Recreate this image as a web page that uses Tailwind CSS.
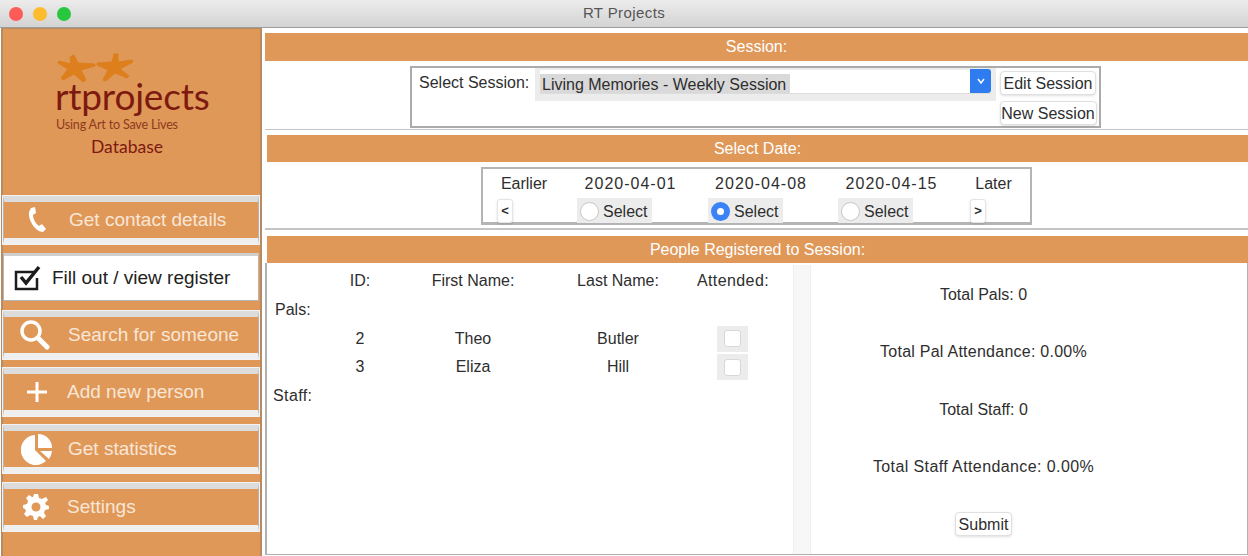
<!DOCTYPE html>
<html lang="en">
<head>
    <meta charset="UTF-8">
    <meta name="viewport" content="width=device-width, initial-scale=1.0">
    <title>RT Projects</title>
    <script src="https://cdn.jsdelivr.net/npm/@tailwindcss/browser@4"></script>
</head>
<body class="bg-white overflow-hidden font-['Liberation_Sans',sans-serif] text-[#2e2e2e]">
<div class="w-[1248px] h-[556px] flex flex-col overflow-hidden">
    <!-- title bar -->
    <div class="h-[28px] shrink-0 relative flex items-center justify-center bg-gradient-to-b from-[#ececec] to-[#d3d3d3] border-b border-[#9c9c9c]">
        <div class="absolute left-[9px] top-[7px] flex gap-[10px]">
            <span class="w-[14px] h-[14px] rounded-full bg-[#fc5b57]"></span>
            <span class="w-[14px] h-[14px] rounded-full bg-[#fdbc2e]"></span>
            <span class="w-[14px] h-[14px] rounded-full bg-[#27c83f]"></span>
        </div>
        <span class="text-[15px] text-[#555] tracking-[0.4px]">RT Projects</span>
    </div>

    <div class="flex flex-1 min-h-0">
        <!-- sidebar -->
        <aside class="ml-[1px] w-[261px] shrink-0 bg-[#e09859] border-l-2 border-r-2 border-t border-[#b9895f] flex flex-col">
            <div class="h-[167px] shrink-0 relative">
                <svg class="absolute left-[52px] top-[23px]" width="84" height="34" viewBox="0 0 84 34" fill="#dd7f1c" stroke="#dd7f1c" stroke-linejoin="round">
                    <g transform="translate(-54 -53)">
                        <path d="M69 58L73 56L77 64L94 65V67L80 71L85 81L82 83L73 75L62 81L60 79L67 70L57 64L58 62L70 65Z" stroke-width="1"/>
                        <path d="M113 55L117 55L117 63L131 61L132 63L119 70L128 77L126 79L114 74L105 82L102 81L107 71L96 66L96 64L111 63Z" stroke-width="1"/>
                    </g>
                </svg>
                <div class="absolute left-[52px] top-[49px] font-['Lato',sans-serif] text-[37px] leading-[36px] text-[#7c1a10] tracking-[-0.2px]">rtprojects</div>
                <div class="absolute left-[53px] top-[88px] font-['Lato',sans-serif] text-[12.600px] leading-[15px] text-[#8f3a1c] tracking-[-0.2px]">Using Art to Save Lives</div>
                <div class="absolute left-[88px] top-[107px] font-['Lato',sans-serif] text-[17.500px] leading-[22px] text-[#7c1a10]">Database</div>
            </div>

            <a class="h-[48px] w-[256px] border border-[#b5b5b5] outline outline-1 outline-[#f2f2f2] border-t-[6px] border-t-[#dcdcdc] border-b-[6px] border-b-[#efefef] flex items-center text-[19px] text-[#f8e6d6] bg-[#e09859]">
                <svg class="ml-[23px] mr-[22px] shrink-0" width="20" height="26" viewBox="0 0 20 26" fill="#fff"><path d="M4 1L8 0L9 6L6 8C6 12 9 17 12 19L15 17L19 22L16 25C9 25 1 14 2 5Z"/></svg>
                <span>Get contact details</span>
            </a>
            <a class="mt-[9px] h-[48px] w-[256px] border border-[#b5b5b5] border-t-[3px] border-t-[#cfcfcf] bg-white flex items-center text-[19px] text-[#222]">
                <svg class="ml-[10px] mr-[11px] shrink-0" width="27" height="27" viewBox="0 0 27 27" fill="none" stroke="#1c1c1c"><path d="M20 7H2V24H23V13" stroke-width="2.500"/><path d="M7 12L12 18L25 2" stroke-width="3.500"/></svg>
                <span>Fill out / view register</span>
            </a>
            <a class="mt-[10px] h-[48px] w-[256px] border border-[#b5b5b5] outline outline-1 outline-[#f2f2f2] border-t-[6px] border-t-[#dcdcdc] border-b-[6px] border-b-[#efefef] flex items-center text-[19px] text-[#f8e6d6] bg-[#e09859]">
                <svg class="ml-[15px] mr-[17px] shrink-0" width="32" height="30" viewBox="0 0 32 30" fill="none" stroke="#fff"><circle cx="12" cy="11" r="9" stroke-width="3.500"/><path d="M19 18L28 27" stroke-width="5" stroke-linecap="round"/></svg>
                <span>Search for someone</span>
            </a>
            <a class="mt-[9px] h-[48px] w-[256px] border border-[#b5b5b5] outline outline-1 outline-[#f2f2f2] border-t-[6px] border-t-[#dcdcdc] border-b-[6px] border-b-[#efefef] flex items-center text-[19px] text-[#f8e6d6] bg-[#e09859]">
                <svg class="ml-[22px] mr-[19px] shrink-0" width="22" height="22" viewBox="0 0 22 22" stroke="#fff" stroke-width="3"><path d="M11 1V21M1 11H21"/></svg>
                <span>Add new person</span>
            </a>
            <a class="mt-[9px] h-[48px] w-[256px] border border-[#b5b5b5] outline outline-1 outline-[#f2f2f2] border-t-[6px] border-t-[#dcdcdc] border-b-[6px] border-b-[#efefef] flex items-center text-[19px] text-[#f8e6d6] bg-[#e09859]">
                <svg class="ml-[17px] mr-[15px] shrink-0" width="32" height="32" viewBox="0 0 32 32" fill="#fff"><path d="M14 2V17L25 28A15 15 0 1 1 14 2Z"/><path d="M17 1A14 14 0 0 1 31 15H17Z"/><path d="M19 18H31A15 15 0 0 1 28 26Z"/></svg>
                <span>Get statistics</span>
            </a>
            <a class="mt-[10px] h-[48px] w-[256px] border border-[#b5b5b5] outline outline-1 outline-[#f2f2f2] border-t-[6px] border-t-[#dcdcdc] border-b-[6px] border-b-[#efefef] flex items-center text-[19px] text-[#f8e6d6] bg-[#e09859]">
                <svg class="ml-[19px] mr-[18px] shrink-0" width="26" height="26" viewBox="0 0 26 26" fill="#fff"><path fill-rule="evenodd" d="M11 0H15L16 4L19 5L23 3L25 6L22 9L23 11L26 12V15L22 16L21 19L23 22L20 25L17 22L15 23L14 26H11L10 22L7 21L4 23L1 20L3 17L2 15L0 14V11L4 10L5 7L3 4L6 1L9 3L10 3Z M13 8.500A4.500 4.500 0 1 0 13 17.500A4.500 4.500 0 1 0 13 8.500Z"/></svg>
                <span>Settings</span>
            </a>
        </aside>

        <!-- main column -->
        <main class="flex-1 min-w-0 ml-[3px] flex flex-col">
            <section class="mt-[5px]">
                <div class="h-[28px] bg-[#e09859] text-white text-[16px] flex items-center justify-center">Session:</div>
                <div class="mt-[5px] ml-[145px] w-[691px] h-[62px] border-2 border-[#ababab] flex items-start">
                    <div class="pl-[7px] pt-[5px] w-[123px] shrink-0 text-[16px] leading-[20px] whitespace-nowrap">Select Session:</div>
                    <div class="h-[33px] w-[461px] bg-[#ececec] px-[5px] pt-[2px] shrink-0">
                        <div class="h-[24px] bg-white border-b border-[#dcdcdc] flex items-end justify-between">
                            <span class="w-[250px] h-[19px] bg-[#d9d9d9] pl-[2px] text-[16px] leading-[22px] whitespace-nowrap">Living Memories - Weekly Session</span>
                            <span class="w-[21px] h-[24px] bg-[#2f7cf0] rounded-r-[3px] flex items-center justify-center">
                                <svg width="10" height="8" viewBox="0 0 10 8" fill="none" stroke="#fff" stroke-width="1.500"><path d="M2 2L5 6L8 2"/></svg>
                            </span>
                        </div>
                    </div>
                    <div class="ml-[3px] pt-[3px] flex flex-col gap-[6px] items-center w-[98px]">
                        <button class="w-[96px] h-[24px] rounded-[4px] bg-white border border-[#e0e0e0] shadow-sm text-[16px] whitespace-nowrap">Edit Session</button>
                        <button class="w-[97px] h-[24px] rounded-[4px] bg-white border border-[#e0e0e0] shadow-sm text-[16px] whitespace-nowrap">New Session</button>
                    </div>
                </div>
            </section>

            <section class="mt-[1px] border-t border-[#c4c4c4]">
                <div class="mt-[5px] ml-[2px] h-[27px] bg-[#e09859] text-white text-[16px] flex items-center justify-center">Select Date:</div>
                <div class="mt-[5px] ml-[216px] w-[551px] h-[58px] border-2 border-b-[3px] border-[#b4b4b4] grid grid-cols-[82px_131px_130px_131px_73px] grid-rows-[29px_1fr] text-center text-[16px]">
                    <div class="pt-[5px] leading-[20px]">Earlier</div>
                    <div class="pt-[5px] leading-[20px] tracking-[1px]">2020-04-01</div>
                    <div class="pt-[5px] leading-[20px] tracking-[1px]">2020-04-08</div>
                    <div class="pt-[5px] leading-[20px] tracking-[1px]">2020-04-15</div>
                    <div class="pt-[5px] leading-[20px]">Later</div>
                    <div class="pl-[14px] pt-[1px] flex"><button class="w-[16px] h-[24px] rounded-[3px] bg-white border border-[#e4e4e4] shadow-sm text-[13px] font-bold">&lt;</button></div>
                    <div class="pl-[12px]"><div class="w-[75px] h-[25px] bg-[#ececec] flex items-center gap-[4px] pl-[3px] pt-[2px]"><span class="w-[19px] h-[19px] rounded-full bg-white border border-[#c8c8c8]"></span><span>Select</span></div></div>
                    <div class="pl-[12px]"><div class="w-[75px] h-[25px] bg-[#ececec] flex items-center gap-[4px] pl-[3px] pt-[2px]"><span class="w-[19px] h-[19px] rounded-full bg-[#3b82f6] flex items-center justify-center"><span class="w-[7px] h-[7px] rounded-full bg-white"></span></span><span>Select</span></div></div>
                    <div class="pl-[12px]"><div class="w-[75px] h-[25px] bg-[#ececec] flex items-center gap-[4px] pl-[3px] pt-[2px]"><span class="w-[19px] h-[19px] rounded-full bg-white border border-[#c8c8c8]"></span><span>Select</span></div></div>
                    <div class="pl-[13px] pt-[1px] flex"><button class="w-[16px] h-[24px] rounded-[3px] bg-white border border-[#e4e4e4] shadow-sm text-[13px] font-bold">&gt;</button></div>
                </div>
            </section>

            <section class="mt-[3px] border-t-2 border-[#c4c4c4] flex-1 min-h-0 flex flex-col">
                <div class="mt-[6px] ml-[2px] h-[27px] shrink-0 bg-[#e09859] text-white text-[16px] flex items-center justify-center">People Registered to Session:</div>
                <div class="flex-1 min-h-0 mb-[1px] border-2 border-t-0 border-[#b0b0b0] border-r border-b flex">
                    <!-- register table -->
                    <div class="w-[526px] shrink-0 pt-[4px] grid grid-cols-[63px_60px_166px_124px_106px] auto-rows-[28.700px] items-center text-center text-[16px]">
                        <div></div><div>ID:</div><div>First Name:</div><div>Last Name:</div><div class="tracking-[0.4px]">Attended:</div>
                        <div class="text-left pl-[8px] col-span-5">Pals:</div>
                        <div></div><div>2</div><div>Theo</div><div>Butler</div>
                        <div class="flex justify-center -ml-[2px]"><span class="w-[31px] h-[26px] bg-[#ececec] flex items-center justify-center"><span class="w-[17px] h-[17px] rounded-[3px] bg-white border border-[#d8d8d8]"></span></span></div>
                        <div></div><div>3</div><div>Eliza</div><div>Hill</div>
                        <div class="flex justify-center -ml-[2px]"><span class="w-[31px] h-[26px] bg-[#ececec] flex items-center justify-center"><span class="w-[17px] h-[17px] rounded-[3px] bg-white border border-[#d8d8d8]"></span></span></div>
                        <div class="text-left pl-[6px] col-span-5 tracking-[0.4px]">Staff:</div>
                    </div>
                    <!-- splitter -->
                    <div class="w-[18px] shrink-0 bg-[#f7f7f7] border-l border-r border-[#efefef] mt-[2px]"></div>
                    <!-- totals -->
                    <div class="flex-1 pr-[91px] pt-[3px] flex flex-col items-center text-[16px]">
                        <div class="h-[57.500px] flex items-center">Total Pals: 0</div>
                        <div class="h-[57.500px] flex items-center tracking-[0.25px]">Total Pal Attendance: 0.00%</div>
                        <div class="h-[57.500px] flex items-center">Total Staff: 0</div>
                        <div class="h-[57.500px] flex items-center tracking-[0.4px]">Total Staff Attendance: 0.00%</div>
                        <button class="mt-[16px] w-[57px] h-[24px] rounded-[4px] bg-white border border-[#e0e0e0] shadow-sm text-[16px]">Submit</button>
                    </div>
                </div>
            </section>
        </main>
    </div>
</div>
</body>
</html>
